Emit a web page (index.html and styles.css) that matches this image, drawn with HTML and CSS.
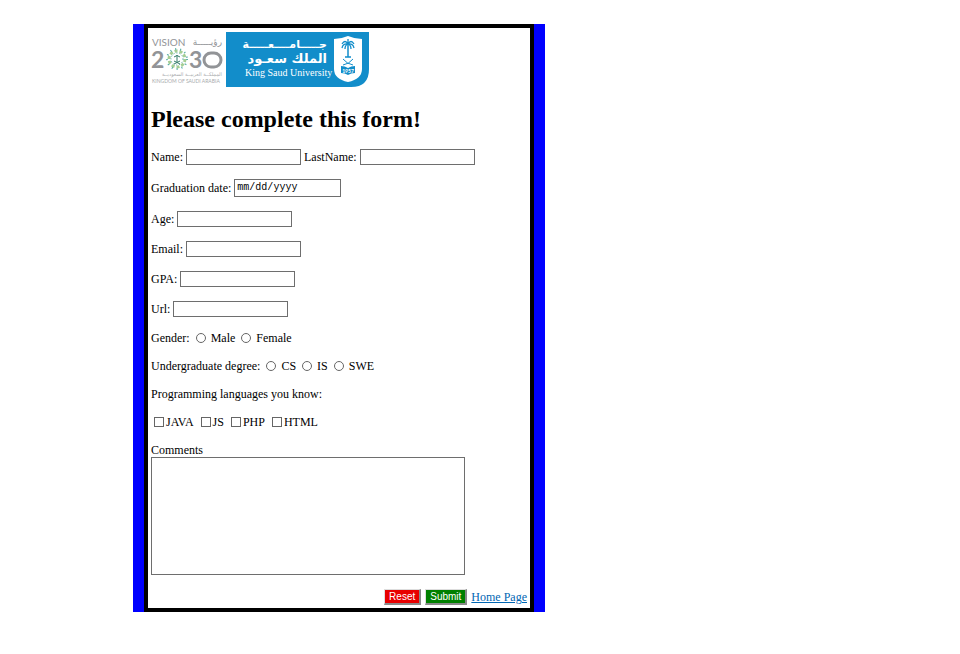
FILE: index.html
```html
<!DOCTYPE html>
<html lang="en">
<head>
<meta charset="utf-8">
<title>King Saud University form</title>
<link rel="stylesheet" href="styles.css">
</head>
<body>
<main class="frame">
<div class="panel">
<header class="logos">
<svg class="vision" viewBox="0 0 75 55" role="img" aria-label="Vision 2030">
<g fill="#929497">
<text class="lato" x="1" y="14" font-size="10">VISION</text>
<text class="arabic" x="71" y="13" font-size="9" text-anchor="end">رؤيـــــة</text>
<text class="lato" x="0" y="36" font-size="23" font-weight="bold">2</text>
<text class="lato" x="38" y="36" font-size="23" font-weight="bold">3</text>
</g>
<rect x="53" y="21" width="17" height="14" rx="7" fill="none" stroke="#929497" stroke-width="3"/>
<g fill="none">
<circle cx="26" cy="27" r="8" stroke="#a5ce93" stroke-width="3" stroke-dasharray="3 2"/>
<circle cx="26" cy="27" r="6" stroke="#4ba3a5" stroke-width="1" stroke-dasharray="1 2"/>
<circle cx="26" cy="27" r="10" stroke="#4faaa0" stroke-width="2" stroke-dasharray="1 4"/>
<path d="M26 23v7M23 25q3-3 6 0M23 32l6-3M23 29l6 3" stroke="#337b69"/>
</g>
<g fill="#a8abad">
<text class="arabic" x="71" y="44" font-size="5" text-anchor="end">المملكــة العربيــة السعوديــة</text>
<text class="lato" x="1" y="51" font-size="5">KINGDOM OF SAUDI ARABIA</text>
</g>
</svg>
<svg class="ksu" viewBox="0 0 143 55" role="img" aria-label="King Saud University">
<path fill="#128dca" d="M0 0h143v37q0 18-18 18H0z"/>
<g fill="#fff">
<text class="arabic" x="101" y="16" font-size="11" font-weight="bold" text-anchor="end">جـــــامــــعـــــة</text>
<text class="arabic" x="101" y="31" font-size="13" font-weight="bold" text-anchor="end">الملك سعـود</text>
<text class="serif" x="19" y="44" font-size="10">King Saud University</text>
<path d="M108 7q7 0 14-3 7 3 14 3v30q0 10-14 13-14-3-14-13z"/>
</g>
<g fill="none" stroke="#128dca">
<path stroke-width="1.500" d="M122 12v13"/>
<path d="M122 12q-3-5-6 0M122 12q3-5 6 0M122 12q-5-1-6 4M122 12q5-1 6 4M122 12q-3 1-3 5M122 12q3 1 3 5M122 12V7M119 25h6" stroke-width="1.300"/>
<path d="M117 33q6-1 10-6M127 33q-6-1-10-6"/>
</g>
<path fill="#128dca" d="M115 34q4 0 7 2 3-2 7-2v7q-4 0-7 2-3-2-7-2z"/>
<text class="lato" x="122" y="41" font-size="5" font-weight="bold" text-anchor="middle" fill="#fff">1957</text>
</svg>
</header>
<h1>Please complete this form!</h1>
<form>
<div class="row">
<label for="name">Name:</label><input class="field" id="name" type="text">
<label for="last">LastName:</label><input class="field" id="last" type="text">
</div>
<div class="row"><label for="grad">Graduation date:</label><input class="field date" id="grad" type="date"></div>
<div class="row"><label for="age">Age:</label><input class="field" id="age" type="text"></div>
<div class="row"><label for="email">Email:</label><input class="field" id="email" type="email"></div>
<div class="row"><label for="gpa">GPA:</label><input class="field" id="gpa" type="text"></div>
<div class="row"><label for="url">Url:</label><input class="field" id="url" type="url"></div>
<div class="row choices" role="radiogroup" aria-labelledby="gender">
<span id="gender">Gender:</span>
<label class="radio"><input type="radio" name="gender">Male</label>
<label class="radio"><input type="radio" name="gender">Female</label>
</div>
<div class="row choices" role="radiogroup" aria-labelledby="degree">
<span id="degree">Undergraduate degree:</span>
<label class="radio"><input type="radio" name="degree">CS</label>
<label class="radio"><input type="radio" name="degree">IS</label>
<label class="radio"><input type="radio" name="degree">SWE</label>
</div>
<div class="row" id="langs">Programming languages you know:</div>
<div class="row checks" role="group" aria-labelledby="langs">
<label class="check"><input type="checkbox">JAVA</label>
<label class="check"><input type="checkbox">JS</label>
<label class="check"><input type="checkbox">PHP</label>
<label class="check"><input type="checkbox">HTML</label>
</div>
<div class="comments">
<label for="comments">Comments</label>
<textarea id="comments"></textarea>
</div>
<div class="actions">
<button class="reset" type="reset">Reset</button>
<button class="submit" type="submit">Submit</button>
<a href="#">Home Page</a>
</div>
</form>
</div>
</main>
</body>
</html>
```
FILE: styles.css
```css
* { box-sizing: border-box; }

body {
  margin: 24px 0 0 133px;
  background: #fff;
  color: #000;
  font: 12px/14px "Liberation Serif", "Times New Roman", serif;
}

.frame {
  max-width: 412px;
  padding: 0 11px;
  background: #00f;
}

.panel {
  padding: 4px 3px 3px;
  border: 4px solid #000;
  background: #fff;
}

.logos { display: flex; }
.vision { width: 75px; height: 55px; }
.ksu { width: 143px; height: 55px; }
.lato { font-family: Lato, sans-serif; }
.serif { font-family: "Liberation Serif", serif; }
.arabic { font-family: "DejaVu Sans", sans-serif; }

h1 {
  margin: 18px 0 16px;
  font-size: 24px;
  line-height: 28px;
}

form {
  display: flex;
  flex-direction: column;
  gap: 14px;
}

.row {
  display: flex;
  align-items: center;
  gap: 3px;
}

.field {
  width: 115px;
  height: 16px;
  padding: 0 2px;
  border: 1px solid #6e6e6e;
  border-radius: 0;
  background: #fff;
}

.date {
  width: 107px;
  height: 18px;
  font: 10px/16px "Liberation Mono", monospace;
}

.date::-webkit-calendar-picker-indicator { display: none; }
.date::-webkit-datetime-edit-fields-wrapper { padding: 0; }
.date::-webkit-datetime-edit-month-field,
.date::-webkit-datetime-edit-day-field,
.date::-webkit-datetime-edit-year-field { padding: 0; }

.choices { gap: 6px; }
.checks { gap: 7px; padding-left: 3px; }

.radio,
.check {
  display: flex;
  align-items: center;
  gap: 5px;
}

.check { gap: 2px; }

.radio input,
.check input {
  appearance: none;
  width: 10px;
  height: 10px;
  margin: 0;
  border: 1px solid #666;
  background: #fff;
}

.radio input { border-radius: 50%; }

.comments {
  display: flex;
  flex-direction: column;
}

textarea {
  width: 314px;
  height: 118px;
  max-width: 100%;
  border: 1px solid #6e6e6e;
  border-radius: 0;
  resize: none;
}

.actions {
  display: flex;
  justify-content: flex-end;
  align-items: center;
  gap: 4px;
}

button {
  height: 16px;
  padding: 0 4px;
  border: 2px outset #ddd;
  border-width: 1px 2px 2px 1px;
  color: #fff;
  font: 10px/12px "Liberation Sans", Arial, sans-serif;
}

.reset { background: #e80000; }
.submit { background: #008000; }

a { color: #0066b3; }
```
